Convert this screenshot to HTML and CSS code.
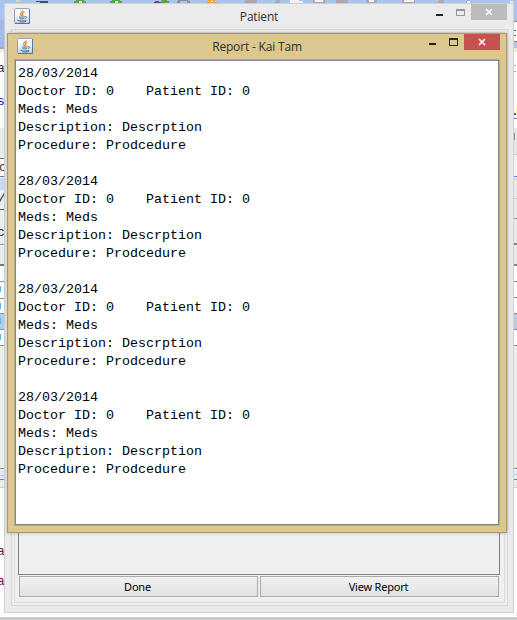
FILE: index.html
```html
<!DOCTYPE html>
<html lang="en">
<head>
<meta charset="utf-8">
<title>Report - Kai Tam</title>
<link rel="stylesheet" href="styles.css">
</head>
<body>
<svg width="0" height="0" class="defs" aria-hidden="true">
  <linearGradient id="tile" x1="0" y1="0" x2="0" y2="1"><stop stop-color="#fff"/><stop offset=".45" stop-color="#f3f5f7"/><stop offset="1" stop-color="#bccddd"/></linearGradient>
  <symbol id="java" viewBox="0 0 16 16">
    <rect x=".5" y=".5" width="15" height="15" rx="1" fill="url(#tile)" stroke="#91a4b5"/>
    <path d="M15.5 1v14.5H1" fill="none" stroke="#587a98"/>
    <path d="M8.9 2.2c.7 1.8-2.7 2.3-2.4 4 .1.8 1 1.2 1.2 2M10.5 4.3C8.2 5 8 6 8.8 6.800c.5.6.1 1.1-.3 1.5" fill="none" stroke="#e9812f" stroke-width="1.2"/>
    <path d="M5 8.800c1 .6 4.500.5 5.800 0M5.500 10.500c1 .6 3.600.5 4.700 0M11 8.700c2.200-.4 2 1.500.2 2M3.500 12c1 1.300 7 1.300 8.700.3M5.500 13.900c2.500.4 5 .1 6.500-.7" fill="none" stroke="#527a9b" stroke-width="1"/>
  </symbol>
</svg>
<div class="desktop">
  <svg class="backdrop" width="517" height="620" shape-rendering="crispEdges" aria-hidden="true">
    <rect width="517" height="620" fill="#fff"/>
    <rect width="517" height="48" fill="#a7c5ee"/>
    <path d="M0 20h5v28H0z" fill="#a2baea"/>
    <path d="M0 47h5v2H0z" fill="#a8a9a9"/><path d="M0 49h5v3H0z" fill="#f0eadc"/>
    <path d="M36 1h12v1H36zM40 2h8v1h-8z" fill="#315c62"/>
    <path d="M16 0h4v2h-4z" fill="#ddd1cd"/>
    <path d="M76 0h8v1h2v2H74V1h2zM112 0h8v1h2v2h-12V1h2zM162 0h5v1h2v2h-8z" fill="#54a941"/>
    <path d="M79 1h3v2h-3zM115 1h3v2h-3z" fill="#d6efc7"/>
    <path d="M155 1h4v1h2v1h-7z" fill="#694b92"/>
    <path d="M178 0h10v1h2v2h-3V1h-7v2h-3z" fill="#8d8f96"/>
    <path d="M208 0h7v2h2v1h-10z" fill="#e3a83e"/><path d="M211 1h2v1h-2z" fill="#fff"/>
    <path d="M245 0h12v3h-13zM276 0h4v3h-5zM313 0h12v3h-12zM336 0h12v3h-12zM366 0h11v3h-11zM402 0h13v3h-13zM439 0h5v3h-6zM467 0h2v3h-3z" fill="#aba9ad"/>
    <path d="M290 0h9v1h4v2h-13zM315 0h8v2h-8zM369 0h5v2h-5zM404 0h10v2h-10zM467 1h3v2h-3zM510 1h3v2h-3z" fill="#f4f3f1"/>
    <path d="M0 128h5v27H0z" fill="#e8e8e8"/><path d="M0 155h5v4H0z" fill="#efefef"/><path d="M0 158h5v1H0z" fill="#65717c"/>
    <path d="M0 176h5v1H0z" fill="#5576b8"/><path d="M0 178h5v12H0z" fill="#c7daf1"/><path d="M0 190h5v54H0z" fill="#ededed"/>
    <path d="M0 209h5v1H0z" fill="#555"/><path d="M0 244h5v1H0z" fill="#8393a3"/><path d="M0 246h5v18H0z" fill="#eaeaea"/><path d="M0 264h5v2H0z" fill="#777"/>
    <path d="M0 281h5v1H0zM0 298h5v1H0zM0 313h5v1H0zM0 329h5v1H0zM0 345h5v1H0z" fill="#8a949e"/>
    <path d="M0 314h5v15H0z" fill="#b8cde5"/><path d="M0 286h1v6H0zM0 303h1v6H0zM0 318h1v6H0zM0 334h1v6H0z" fill="#54b8ee"/>
    <path d="M0 346h5v122H0z" fill="#eee"/><path d="M0 468h5v1H0zM0 479h5v1H0z" fill="#768899"/><path d="M0 470h5v9H0z" fill="#e0eaf4"/><path d="M0 475h5v1H0z" fill="#a9cae8"/><path d="M0 480h5v8H0z" fill="#ececec"/><path d="M0 487h5v1H0z" fill="#ccc"/>
    <path d="M513 22h4v19h-4zM513 51h4v40h-4z" fill="#fff"/><path d="M513 21h4v1h-4zM513 41h4v1h-4z" fill="#777f8e"/><path d="M513 42h4v5h-4z" fill="#b4c7f0"/><path d="M513 48h4v4h-4z" fill="#eee8dc"/>
    <path d="M514 30h2v1h-2zM514 35h2v1h-2z" fill="#446678"/><path d="M514 65h2v1h-2zM514 71h2v1h-2z" fill="#aaa"/>
    <path d="M516 106h1v9h-1z" fill="#ffff9b"/><path d="M514 113h2v2h-2z" fill="#346db0"/><path d="M514 118h3v1h-3z" fill="#777"/>
    <path d="M514 128h3v27h-3z" fill="#e8e8e8"/><path d="M514 133h1v7h-1z" fill="#888"/><path d="M514 155h3v21h-3z" fill="#f2f2f2"/><path d="M514 154h3v1h-3z" fill="#ccc"/>
    <path d="M514 176h3v1h-3z" fill="#5a7fc1"/><path d="M514 178h3v2h-3z" fill="#c3dcf5"/><path d="M514 180h3v84h-3z" fill="#ebebeb"/>
    <path d="M514 198h3v1h-3z" fill="#acd0ef"/><path d="M514 218h3v1h-3zM514 243h3v2h-3zM514 264h3v2h-3zM514 281h3v1h-3zM514 297h3v1h-3zM514 313h3v1h-3zM514 329h3v1h-3zM514 345h3v1h-3z" fill="#77838f"/>
    <path d="M514 314h3v15h-3z" fill="#b8cde5"/><path d="M514 346h3v122h-3z" fill="#eee"/><path d="M514 468h3v1h-3zM514 479h3v1h-3z" fill="#6c839a"/><path d="M514 470h3v9h-3z" fill="#e3edf6"/><path d="M514 474h3v1h-3z" fill="#b3d5f0"/><path d="M514 480h3v8h-3z" fill="#ececec"/><path d="M514 487h3v1h-3z" fill="#ccc"/>
    <path d="M0 617h517v3H0z" fill="#cbcbcb"/>
    <g class="edge-text">
      <text x="-3" y="72" fill="#333">a</text><text x="-3" y="105" fill="#2020b0">s</text>
      <text x="-1" y="171" fill="#333">c</text><text x="-2" y="202" fill="#222">/</text><text x="-3" y="236" fill="#333">c</text>
      <text x="-3" y="555" fill="#7d0850">a</text><text x="-3" y="585" fill="#7d0850">a</text>
    </g>
  </svg>

  <section class="window patient">
    <header class="titlebar">
      <svg class="java"><use href="#java"/></svg>
      <h1>Patient</h1>
      <div class="controls"><i class="min"></i><i class="max"></i><b class="close"><svg viewBox="0 0 8 8"><path d="M1 1l6 6M7 1L1 7"/></svg></b></div>
    </header>
    <div class="frame"><div class="content">
      <div class="panel"></div>
      <div class="buttons"><button>Done</button><button>View Report</button></div>
    </div></div>
  </section>

  <section class="window report">
    <header class="titlebar">
      <svg class="java"><use href="#java"/></svg>
      <h1>Report - Kai Tam</h1>
      <div class="controls"><i class="min"></i><i class="max"></i><b class="close"><svg viewBox="0 0 8 8"><path d="M1 1l6 6M7 1L1 7"/></svg></b></div>
    </header>
    <pre class="log">28/03/2014
Doctor ID: 0    Patient ID: 0
Meds: Meds
Description: Descrption
Procedure: Prodcedure

28/03/2014
Doctor ID: 0    Patient ID: 0
Meds: Meds
Description: Descrption
Procedure: Prodcedure

28/03/2014
Doctor ID: 0    Patient ID: 0
Meds: Meds
Description: Descrption
Procedure: Prodcedure

28/03/2014
Doctor ID: 0    Patient ID: 0
Meds: Meds
Description: Descrption
Procedure: Prodcedure</pre>
  </section>
</div>
</body>
</html>
```

FILE: styles.css
```css
* { box-sizing: border-box; }
body { margin: 0; overflow: hidden; }
.defs { position: absolute; }
.desktop { position: relative; width: 517px; height: 620px; overflow: hidden; }
.backdrop { display: block; }
.edge-text { font: 13px "Liberation Mono", monospace; }

.window { position: absolute; display: flex; flex-direction: column; }
.patient {
  left: 4px; top: 3px; width: 510px; height: 610px;
  padding: 0 6px 6px;
  background: #ebebeb; border: 1px solid #cfcfcf;
}
.report {
  left: 7px; top: 33px; width: 500px; height: 500px;
  padding: 0 7px 7px;
  background: #dcc88e; border: 1px solid #aa9868;
  box-shadow: 0 0 4px rgba(0, 0, 0, .22);
}

.titlebar { position: relative; display: flex; justify-content: space-between; height: 25px; flex: none; }
.report .titlebar { height: 26px; margin: 0 -1px; }
.java { width: 16px; height: 16px; margin: 4px 0 0 3px; }
.titlebar h1 {
  position: absolute; left: 0; right: 0; top: 5px;
  margin: 0; text-align: center;
  font: 12px/16px "Open Sans", sans-serif; letter-spacing: -.18px; color: #303030;
}
.controls { display: flex; align-items: flex-start; }
.min { width: 7px; height: 2px; margin: 9px 13px 0 0; background: #222; }
.max { width: 9px; height: 7px; margin: 5px 6px 0 0; border: 1px solid #999; border-top-width: 2px; }
.patient .min { margin-top: 10px; }
.report .max { border-color: #2c291f; height: 8px; margin-top: 4px; }
.close { display: flex; align-items: center; justify-content: center; width: 36px; height: 16px; background: #bcbcbc; }
.report .close { background: #c75050; }
.close svg { width: 8px; height: 8px; fill: none; stroke: #fff; stroke-width: 1.6; }

.frame { flex: 1; display: flex; padding: 2px; margin-right: -1px; background: #efefef; border: 1px solid #d8d8d8; }
.content { flex: 1; display: flex; flex-direction: column; padding: 0 4px 5px 3px; border: 1px solid #dcdcdc; background: #efefef; }
.panel { flex: 1; border: 1px solid #7a8490; margin-bottom: 1px; }
.buttons { display: grid; grid-template-columns: 239px 239px; gap: 2px; padding-left: 1px; }
.buttons button {
  height: 21px; padding: 0 2px 0 0; border: 1px solid #aaa; border-radius: 0;
  background: linear-gradient(#f1f1f1, #e2e2e2);
  font: 11px/19px "Noto Sans", sans-serif; letter-spacing: -.2px; color: #000;
}

.log {
  flex: 1; margin: 0; padding: 4px 2px;
  background: #fff; border: 1px solid #7c8794; box-shadow: 0 0 0 1px #b9a97b;
  font: 13.333px/18px "Liberation Mono", monospace; color: #000;
}
```
